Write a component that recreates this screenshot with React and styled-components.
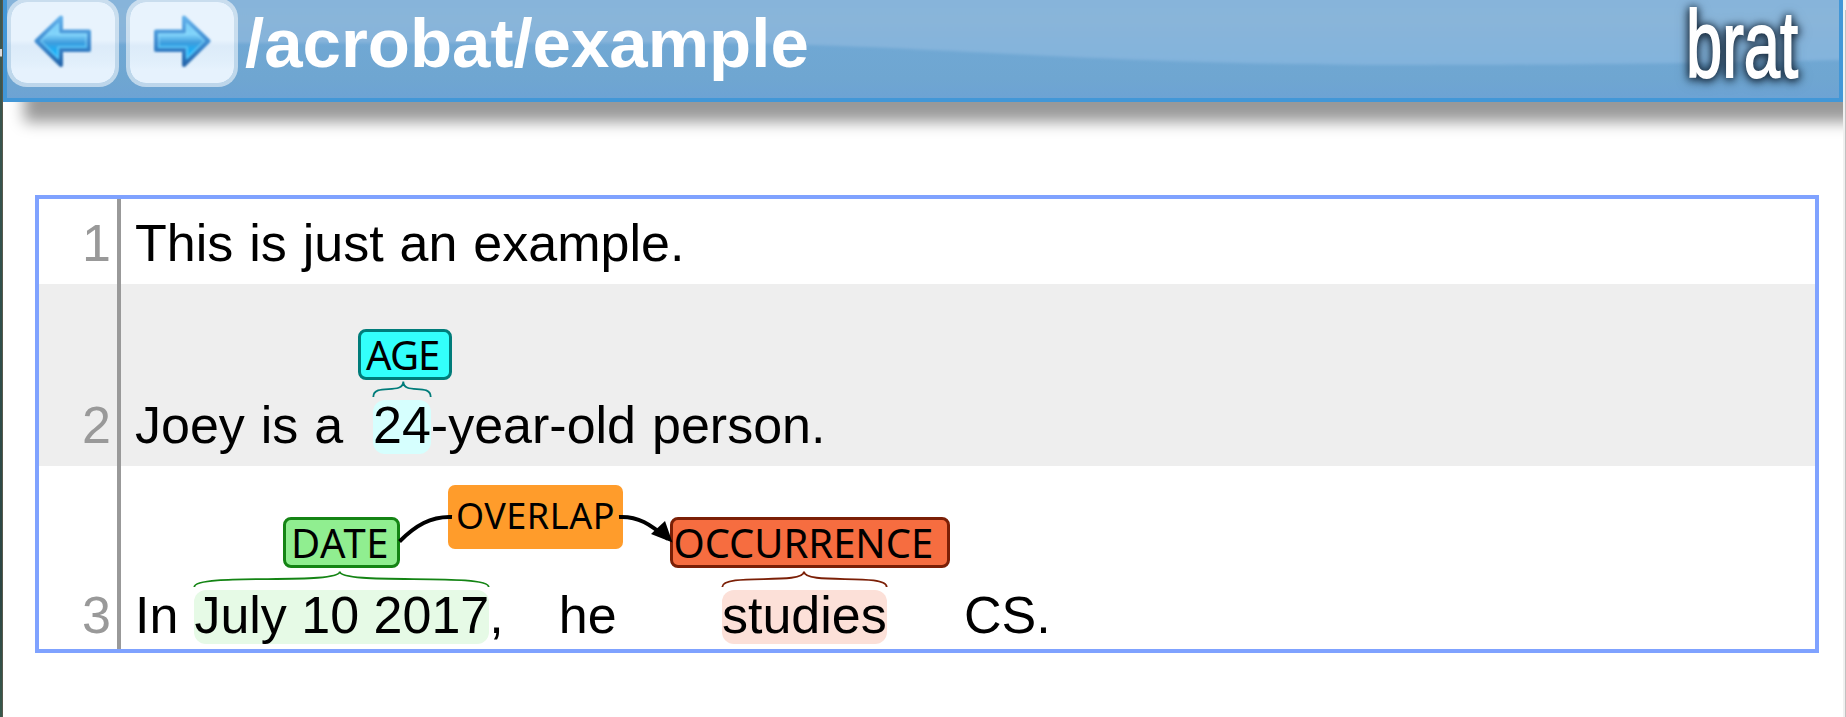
import React from 'react';
import styled, { createGlobalStyle } from 'styled-components';

const GlobalStyle = createGlobalStyle`
  body { margin: 0; background: #fff; overflow: hidden; }
  * { box-sizing: border-box; }
`;

const Screen = styled.div`
  display: flex;
  width: 1846px;
  height: 717px;
  overflow: hidden;
  font-family: "Liberation Sans", Arial, sans-serif;
`;

const DesktopEdge = styled.div`
  flex: 0 0 3px;
  border-right: 1px solid #57594c;
  background: linear-gradient(#3c5750 0 49px, #dcdcdc 49px 56px, #3c5750 57px, #30504c 300px, #2c4644 590px, #38584c);
`;

const Page = styled.main`
  flex: 0 0 1840px;
  overflow: hidden;
  background: #fff;
`;

const Scrollbar = styled.div`
  flex: 0 0 3px;
  padding-top: 10px;
  background: #f0f0f0;
`;

const ScrollThumb = styled.div`
  height: 707px;
  margin-left: 2px;
  background: #c1c1c1;
`;

const Header = styled.header`
  position: relative;
  display: flex;
  align-items: flex-start;
  height: 102px;
  border: 4px solid #4297d7;
  border-top: 0;
  background: #6fa6d2;
  box-shadow: 21px 20px 14px rgba(0, 0, 0, 0.4);
`;

const Gloss = styled.svg`
  position: absolute;
  inset: 0;
  width: 100%;
  height: 100%;
`;

const Nav = styled.nav`
  position: relative;
  display: flex;
  gap: 7px;
  margin-top: -2px;
`;

const NavButton = styled.button`
  display: block;
  width: 112px;
  height: 89px;
  padding: 0;
  border: 4px solid rgba(255, 255, 255, 0.55);
  border-radius: 20px;
  background: linear-gradient(#e8f3fd 0 38px, #dcebf9 44px, #e1effb 60px, #e6f2fd 68px) padding-box;

  svg { display: block; width: 104px; height: 81px; }
`;

const Title = styled.h1`
  position: relative;
  margin: 0 0 0 7px;
  color: #fff;
  font-size: 69px;
  font-weight: bold;
  line-height: 88px;
`;

const Logo = styled.svg`
  position: relative;
  width: 130px;
  height: 98px;
  margin: 0 29px 0 auto;
  overflow: visible;
  fill: #fff;
  stroke: #fff;
  stroke-width: 2px;
  font: 95px "Liberation Sans", Arial, sans-serif;
  filter: drop-shadow(0 1px 4px #123) drop-shadow(0 1px 4px rgba(17, 34, 51, 0.6));
`;

const Document = styled.section`
  margin: 93px 24px 0 32px;
  border: 4px solid #7fa2ff;
`;

const Row = styled.div`
  position: relative;
  display: flex;
  height: ${(p) => p.$height}px;
  background: ${(p) => (p.$shaded ? '#eee' : '#fff')};
  font-size: 52px;
  line-height: 50px;
`;

const LineNumber = styled.div`
  display: flex;
  flex: 0 0 82px;
  align-items: flex-end;
  justify-content: flex-end;
  padding: 0 6px ${(p) => p.$bottom + 4}px 0;
  border-right: 4px solid #999;
  color: #999;
`;

const Sentence = styled.div`
  display: flex;
  flex: 1;
  align-items: flex-end;
  padding: 0 0 ${(p) => p.$bottom}px 14px;
  color: #000;
  white-space: pre;
`;

const Word = styled.span`
  position: relative;
  height: 54px;
  margin-left: ${(p) => p.$gap || 0}px;
  border-radius: 12px;
  background: ${(p) => p.$fill || 'transparent'};
  word-spacing: ${(p) => p.$space || 0}px;
`;

const Tag = styled.span`
  position: absolute;
  top: ${(p) => p.$top}px;
  left: ${(p) => p.$left}px;
  width: ${(p) => p.$width}px;
  height: 51px;
  padding-left: ${(p) => p.$inset}px;
  border: 3px solid ${(p) => p.$line};
  border-radius: 8px;
  background: ${(p) => p.$fill};
  font: 40px/45px "Noto Sans", sans-serif;
  letter-spacing: ${(p) => p.$track || 0}px;
`;

const Relation = styled.span`
  position: absolute;
  top: 19px;
  left: 409px;
  width: 175px;
  height: 64px;
  padding-left: 8px;
  border-radius: 7px;
  background: #ff9c2b;
  color: #000;
  font: 36px/62px "Noto Sans", sans-serif;
  letter-spacing: 0.5px;
`;

const BraceSvg = styled.svg`
  position: absolute;
  top: -19.5px;
  left: 0;
  overflow: visible;
`;

const ArcLayer = styled.svg`
  position: absolute;
  top: 0;
  left: 0;
`;

function Brace({ width, peak, color }) {
  return (
    <BraceSvg width={width} height="17" fill="none" stroke={color} strokeWidth="1.8">
      <path d={`M0.3 16 C0.3 1.5 ${peak} 14.5 ${peak} 0.5 C${peak} 14.5 ${width - 0.3} 1.5 ${width - 0.3} 16`} />
    </BraceSvg>
  );
}

function Entity({ children, gap, tint, line, width, peak, label, tag }) {
  return (
    <Word $gap={gap} $fill={tint}>
      <Tag $line={line} $fill={tag.fill} $top={tag.top} $left={tag.left} $width={tag.width} $inset={tag.inset} $track={tag.track}>
        {label}
      </Tag>
      <Brace width={width} peak={peak} color={line} />
      {children}
    </Word>
  );
}

function ArrowIcon({ right }) {
  const id = right ? 'arrow-right' : 'arrow-left';
  return (
    <svg viewBox="0 0 104 81">
      <defs>
        <linearGradient id={id} x1="0" y1="0" x2="0" y2="1">
          <stop offset="0" stopColor="#64bff2" />
          <stop offset="0.35" stopColor="#83d5fb" />
          <stop offset="0.53" stopColor="#3f9ddd" />
          <stop offset="0.75" stopColor="#13b2fa" />
          <stop offset="1" stopColor="#1d8fdc" />
        </linearGradient>
        <linearGradient id={`${id}-edge`} x1="0" y1="0" x2="0" y2="1">
          <stop offset="0" stopColor="#62b0ea" />
          <stop offset="0.6" stopColor="#3a86cc" />
          <stop offset="1" stopColor="#2566ab" />
        </linearGradient>
        <filter id={`${id}-soft`}><feGaussianBlur stdDeviation="0.8" /></filter>
      </defs>
      <g transform={right ? 'translate(104 0) scale(-1 1)' : undefined} strokeLinejoin="round" filter={`url(#${id}-soft)`}>
        <path d="M25.500 39 L50 15.500 V29.500 H78 V48 H50 V63 Z" fill={`url(#${id})`} stroke={`url(#${id}-edge)`} strokeWidth="4" />
        <path d="M30 39 L47 22 V32.500 H75 V45 H47 V56 Z" fill="none" stroke="#8cdcff" strokeWidth="1.500" opacity="0.55" />
      </g>
    </svg>
  );
}

export default function App() {
  return (
    <>
      <GlobalStyle />
      <Screen>
        <DesktopEdge />
        <Page>
          <Header>
            <Gloss viewBox="0 0 1832 98" preserveAspectRatio="none">
              <defs>
                <linearGradient id="sky" x1="0" y1="0" x2="0" y2="1">
                  <stop offset="0" stopColor="#85b4da" />
                  <stop offset="0.4" stopColor="#89b5d9" />
                  <stop offset="1" stopColor="#82b3dc" />
                </linearGradient>
                <linearGradient id="base" x1="0" y1="0" x2="0" y2="1">
                  <stop offset="0.4" stopColor="#70a8d4" />
                  <stop offset="0.8" stopColor="#6fa6d1" />
                  <stop offset="1" stopColor="#6da3d4" />
                </linearGradient>
                <filter id="soften" x="-1%" y="-10%" width="102%" height="120%">
                  <feGaussianBlur stdDeviation="1.500" />
                </filter>
              </defs>
              <rect width="1832" height="98" fill="url(#base)" />
              <path d="M-10 -10 H1842 V60 C1740 62 1600 65 1400 65 C1080 65 900 43 700 43 H-10 Z" fill="url(#sky)" filter="url(#soften)" />
            </Gloss>
            <Nav>
              <NavButton aria-label="Previous document"><ArrowIcon /></NavButton>
              <NavButton aria-label="Next document"><ArrowIcon right /></NavButton>
            </Nav>
            <Title>/acrobat/example</Title>
            <Logo viewBox="0 0 130 98">
              <text x="6" y="77" textLength="112" lengthAdjust="spacingAndGlyphs">brat</text>
            </Logo>
          </Header>

          <Document>
            <Row $height={85}>
              <LineNumber $bottom={12}>1</LineNumber>
              <Sentence $bottom={12}><Word $space={1.5}>This is just an example.</Word></Sentence>
            </Row>
            <Row $height={182} $shaded>
              <LineNumber $bottom={12}>2</LineNumber>
              <Sentence $bottom={12}>
                <Word $space={1.5}>Joey is a</Word>
                <Entity
                  gap={29.8} tint="#d6fffe" line="#007c7a" width={58} peak={30.3} label="AGE"
                  tag={{ fill: '#33fffb', top: -71.5, left: -15.5, width: 94.5, inset: 5.5, track: -0.9 }}
                >24</Entity>
                <Word $space={1.5}>-year-old person.</Word>
              </Sentence>
            </Row>
            <Row $height={183}>
              <LineNumber $bottom={5}>3</LineNumber>
              <Sentence $bottom={5}>
                <Word>In</Word>
                <Entity
                  gap={16} tint="#e6fae6" line="#148414" width={295} peak={145.8} label="DATE"
                  tag={{ fill: '#90ee90', top: -73.5, left: 88.5, width: 117, inset: 5, track: 0.7 }}
                >July 10 2017</Entity>
                <Word>,</Word>
                <Word $gap={55}>he</Word>
                <Entity
                  gap={105.4} tint="#fce0d8" line="#7b1f06" width={165} peak={82} label="OCCURRENCE"
                  tag={{ fill: '#f66d40', top: -73.5, left: -51.5, width: 279.5, inset: 0, track: -0.05 }}
                >studies</Entity>
                <Word $gap={77.3}>CS.</Word>
              </Sentence>
              <Relation>OVERLAP</Relation>
              <ArcLayer width="800" height="100" viewBox="39 466 800 100" fill="none" stroke="#000" strokeWidth="4">
                <path d="M399.500 541.500 C415 526 431 516 452 517" />
                <path d="M619 517 C638 516 650 524 668 539" />
                <path d="M672.500 542.500 L651 534 L665 521 Z" fill="#000" stroke="none" />
              </ArcLayer>
            </Row>
          </Document>
        </Page>
        <Scrollbar><ScrollThumb /></Scrollbar>
      </Screen>
    </>
  );
}
